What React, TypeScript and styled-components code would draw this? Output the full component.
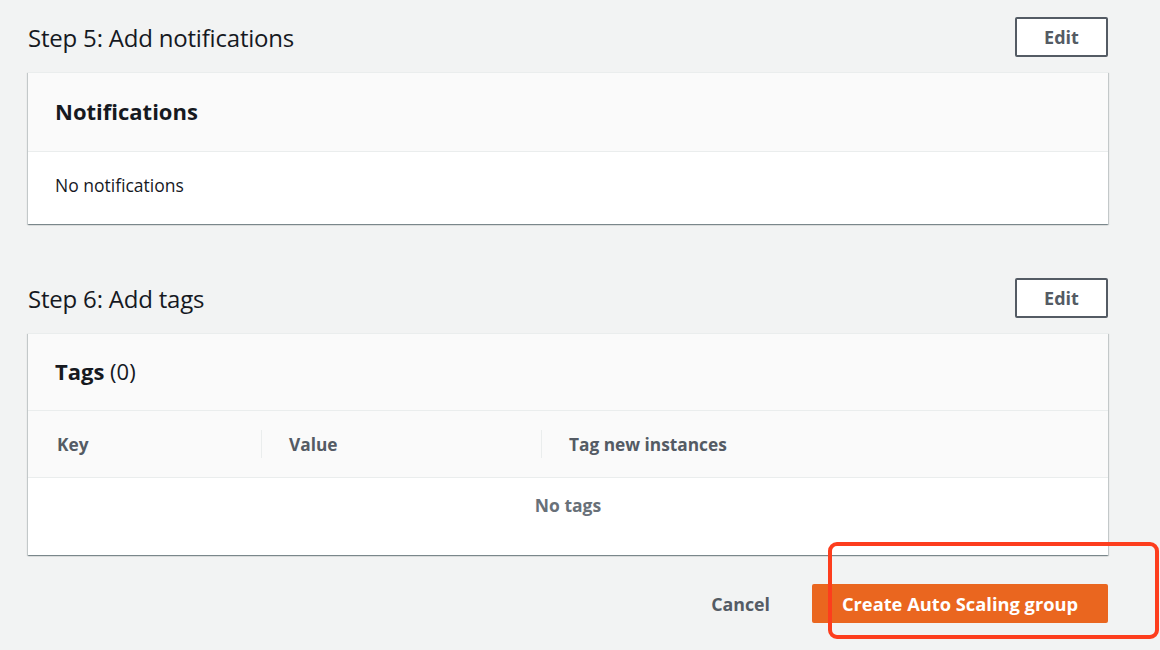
import React from "react";
import styled, { createGlobalStyle } from "styled-components";

const GlobalStyle = createGlobalStyle`
  html, body {
    margin: 0;
    padding: 0;
    background: #f2f3f3;
  }
  body {
    font-family: "Open Sans", "Noto Sans", "Liberation Sans", sans-serif;
    color: #16191f;
  }
`;

const Page = styled.div`
  position: relative;
  width: 1160px;
  height: 650px;
  overflow: hidden;
  box-sizing: border-box;
  padding: 17px 52px 0 28px;
`;

const Section = styled.section<{ $gap?: number }>`
  display: flex;
  flex-direction: column;
  margin-bottom: ${(p) => p.$gap ?? 0}px;
`;

const SectionHead = styled.div`
  display: flex;
  align-items: center;
  justify-content: space-between;
  height: 40px;
  margin-bottom: 15px;
`;

const StepTitle = styled.h2`
  margin: 0;
  font-size: 24px;
  font-weight: 400;
  letter-spacing: -0.2px;
  color: #16191f;
`;

const EditButton = styled.button`
  width: 93px;
  height: 40px;
  box-sizing: border-box;
  border: 2px solid #545b64;
  border-radius: 2px;
  background: #fff;
  color: #545b64;
  font-family: inherit;
  font-size: 18px;
  font-weight: 700;
  cursor: pointer;
`;

const Card = styled.div`
  background: #fff;
  border-top: 1px solid #eaeded;
  box-shadow: 0 1px 1px 0 rgba(0, 28, 36, 0.3), 1px 1px 1px 0 rgba(0, 28, 36, 0.15),
    -1px 1px 1px 0 rgba(0, 28, 36, 0.15);
`;

const CardHeader = styled.div<{ $h: number }>`
  height: ${(p) => p.$h}px;
  display: flex;
  align-items: center;
  padding: 0 27px 2px;
  box-sizing: border-box;
  background: #fafafa;
  border-bottom: 1px solid #eaeded;
`;

const CardTitle = styled.h3`
  margin: 0;
  font-size: 22px;
  font-weight: 700;
  color: #16191f;
  span {
    font-weight: 400;
  }
`;

const CardBody = styled.div`
  height: 72px;
  display: flex;
  align-items: center;
  padding: 0 27px 6px;
  box-sizing: border-box;
  font-size: 17.5px;
`;

const TableHead = styled.div`
  display: grid;
  grid-template-columns: 233px 280px 1fr;
  height: 66px;
  background: #fafafa;
  border-bottom: 1px solid #eaeded;
`;

const HeadCell = styled.div<{ $divider?: boolean }>`
  display: flex;
  align-items: center;
  padding-left: ${(p) => (p.$divider ? 27 : 29)}px;
  font-size: 17.3px;
  font-weight: 700;
  color: #545b64;
  border-left: ${(p) => (p.$divider ? "1px solid #eaeded" : "none")};
  margin: 19px 0;
`;

const EmptyRow = styled.div`
  height: 77px;
  display: flex;
  justify-content: center;
  padding-top: 15px;
  box-sizing: border-box;
  font-size: 17.5px;
  font-weight: 700;
  color: #687078;
`;

const Footer = styled.div`
  display: flex;
  justify-content: flex-end;
  align-items: center;
  gap: 42px;
  margin-top: 29px;
`;

const CancelButton = styled.button`
  border: none;
  background: none;
  padding: 0;
  font-family: inherit;
  font-size: 17.8px;
  font-weight: 700;
  color: #545b64;
  cursor: pointer;
`;

const PrimaryButton = styled.button`
  width: 296px;
  height: 39px;
  border: none;
  border-radius: 2px;
  background: #ea661f;
  color: #fff;
  font-family: inherit;
  font-size: 18.3px;
  font-weight: 700;
  cursor: pointer;
`;

const Highlight = styled.div`
  position: absolute;
  left: 828px;
  top: 542px;
  width: 331px;
  height: 97px;
  box-sizing: border-box;
  border: 4px solid #fd3d1d;
  border-radius: 9px;
  pointer-events: none;
`;

const App: React.FC = () => {
  return (
    <>
      <GlobalStyle />
      <Page>
        <Section $gap={54}>
          <SectionHead>
            <StepTitle>Step 5: Add notifications</StepTitle>
            <EditButton>Edit</EditButton>
          </SectionHead>
          <Card>
            <CardHeader $h={79}>
              <CardTitle>Notifications</CardTitle>
            </CardHeader>
            <CardBody>No notifications</CardBody>
          </Card>
        </Section>

        <Section>
          <SectionHead>
            <StepTitle>Step 6: Add tags</StepTitle>
            <EditButton>Edit</EditButton>
          </SectionHead>
          <Card>
            <CardHeader $h={77}>
              <CardTitle>
                Tags <span>(0)</span>
              </CardTitle>
            </CardHeader>
            <TableHead>
              <HeadCell>Key</HeadCell>
              <HeadCell $divider>Value</HeadCell>
              <HeadCell $divider>Tag new instances</HeadCell>
            </TableHead>
            <EmptyRow>No tags</EmptyRow>
          </Card>
        </Section>

        <Footer>
          <CancelButton>Cancel</CancelButton>
          <PrimaryButton>Create Auto Scaling group</PrimaryButton>
        </Footer>

        <Highlight />
      </Page>
    </>
  );
};

export default App;
